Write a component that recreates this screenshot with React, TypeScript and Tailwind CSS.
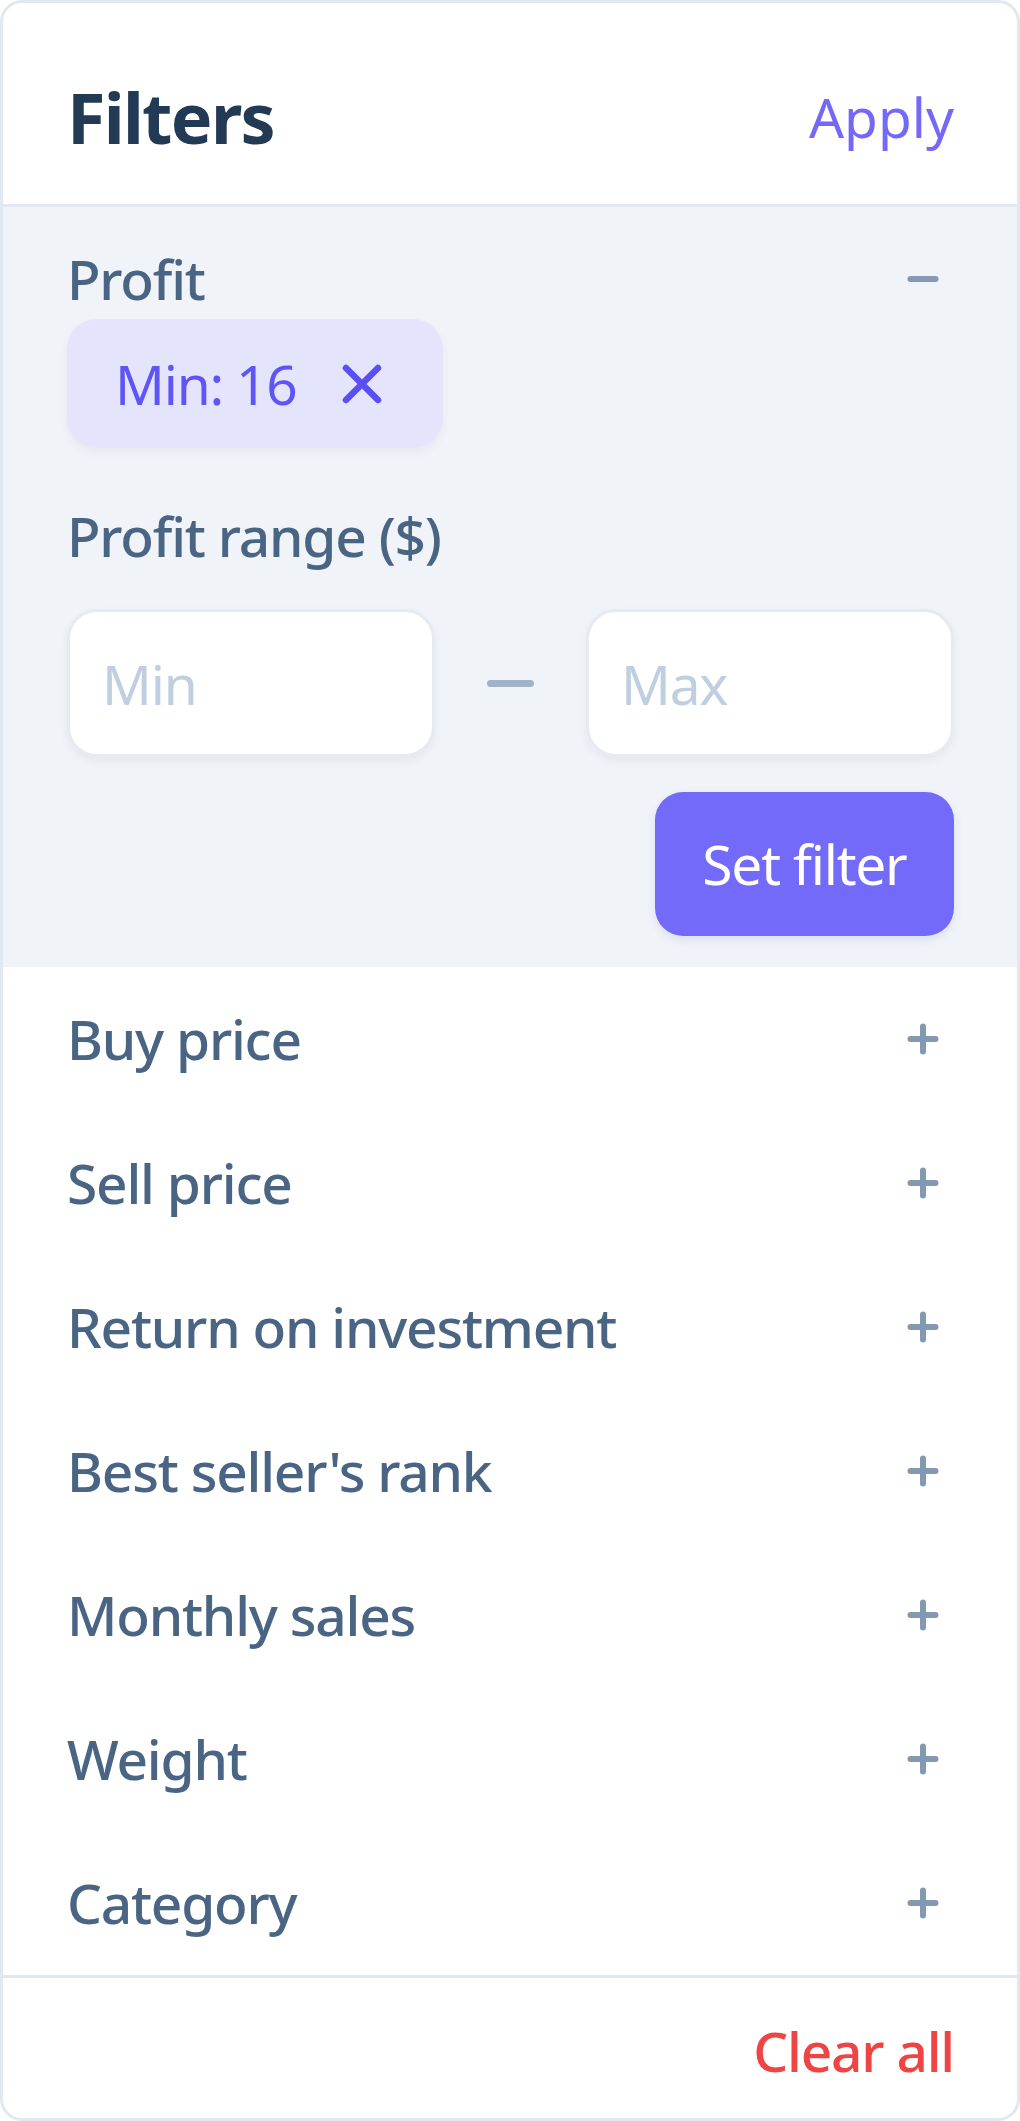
import React from 'react';

const FONT = { fontFamily: '"Noto Sans", "Open Sans", sans-serif' };

const FILTERS = [
  'Buy price',
  'Sell price',
  'Return on investment',
  "Best seller's rank",
  'Monthly sales',
  'Weight',
  'Category',
];

const PlusIcon = () => (
  <svg width="32" height="32" viewBox="0 0 32 32" className="mr-[15px] shrink-0">
    <path d="M3.5 16h25M16 3.5v25" stroke="#8399b2" strokeWidth="6" strokeLinecap="round" />
  </svg>
);

const MinusIcon = () => (
  <svg width="32" height="32" viewBox="0 0 32 32" className="mr-[15px] shrink-0">
    <path d="M3.5 16h25" stroke="#8399b2" strokeWidth="6" strokeLinecap="round" />
  </svg>
);

const App: React.FC = () => {
  return (
    <div className="w-[1020px] h-[2121px] bg-white tracking-[-1.2px]" style={FONT}>
      <div className="h-full flex flex-col border-[3px] border-[#e2e8f0] rounded-[22px] overflow-hidden bg-white">
        {/* header */}
        <div className="flex items-center justify-between pl-[64px] pr-[63px] pt-[74px] pb-[47px] border-b-[3px] border-[#e2e8f0]">
          <h2 className="text-[70px] leading-[80px] font-bold text-[#233a55] tracking-[-1.7px]">Filters</h2>
          <button className="text-[55px] leading-[64px] text-[#7468f8] tracking-normal">Apply</button>
        </div>

        {/* open section */}
        <div className="bg-[#f0f4f8] pl-[64px] pr-[63px] pt-[40px] pb-[31px]">
          <div className="flex items-center justify-between">
            <span className="text-[55px] leading-[64px] font-medium text-[#4a6583]">Profit</span>
            <MinusIcon />
          </div>

          <div className="mt-[8px] flex">
            <div className="flex items-center h-[129px] w-[376px] pl-[48px] rounded-[30px] bg-[#e4e5fd] shadow-[0_4px_10px_rgba(60,60,120,0.06)]">
              <span className="text-[55px] leading-[64px] text-[#5f54f5]">Min: 16</span>
              <svg width="42" height="42" viewBox="0 0 42 42" className="ml-[44px]">
                <path d="M5 5l32 32M37 5L5 37" stroke="#5a4ff3" strokeWidth="6.5" strokeLinecap="round" />
              </svg>
            </div>
          </div>

          <div className="mt-[56px] text-[55px] leading-[64px] font-medium text-[#4a6583]">Profit range ($)</div>

          <div className="mt-[41px] flex items-center">
            <input
              placeholder="Min"
              className="flex-1 min-w-0 h-[148px] rounded-[30px] border-[3px] border-[#e6ebf1] bg-white px-[32px] text-[55px] tracking-[-1.2px] placeholder:text-[#bfcfe0] shadow-[0_4px_10px_rgba(0,0,0,0.05)] outline-none"
              style={FONT}
            />
            <div className="w-[47px] h-[7px] rounded-full bg-[#a0b3c8] mx-[52px] shrink-0" />
            <input
              placeholder="Max"
              className="flex-1 min-w-0 h-[148px] rounded-[30px] border-[3px] border-[#e6ebf1] bg-white px-[32px] text-[55px] tracking-[-1.2px] placeholder:text-[#bfcfe0] shadow-[0_4px_10px_rgba(0,0,0,0.05)] outline-none"
              style={FONT}
            />
          </div>

          <div className="mt-[35px] flex justify-end">
            <button className="w-[299px] h-[144px] rounded-[28px] bg-[#736afa] text-white text-[55px] leading-[64px] tracking-[-1.2px] shadow-[0_4px_10px_rgba(80,70,200,0.12)]">
              Set filter
            </button>
          </div>
        </div>

        {/* collapsed rows */}
        <div className="flex-1 pl-[64px] pr-[63px]">
          {FILTERS.map((f) => (
            <div key={f} className="h-[144px] flex items-center justify-between">
              <span className="text-[55px] leading-[64px] font-medium text-[#4a6583]">{f}</span>
              <PlusIcon />
            </div>
          ))}
        </div>

        {/* footer */}
        <div className="border-t-[3px] border-[#e2e8f0] h-[143px] flex items-center justify-end pr-[63px] pt-[6px]">
          <button className="text-[55px] leading-[64px] font-medium text-[#ef4444] tracking-[-1.2px]">Clear all</button>
        </div>
      </div>
    </div>
  );
};

export default App;
